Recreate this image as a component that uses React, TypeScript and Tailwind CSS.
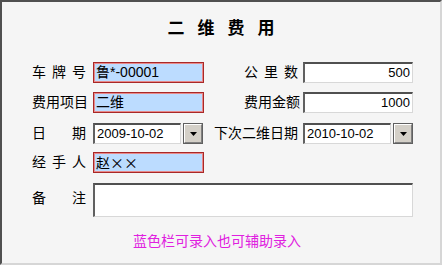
const FONT = "font-['Liberation_Sans','Noto_Sans_CJK_SC',sans-serif]";

function Spread({ chars, w = "w-[54px]" }: { chars: string[]; w?: string }) {
  return (
    <div className={`${w} flex justify-between text-[14px] leading-[21px] text-black`}>
      {chars.map((c, i) => (
        <span key={i}>{c}</span>
      ))}
    </div>
  );
}

function BlueInput({ children }: { children: React.ReactNode }) {
  return (
    <div className="w-[111px] h-[21px] bg-[#bcdcff] border border-[#a82828] shadow-[inset_0_0_0_1px_#e88a8a] px-[2px] text-[14px] leading-[19px] text-black">
      {children}
    </div>
  );
}

function SunkenInput({ value, w, align = "text-left" }: { value: string; w: string; align?: string }) {
  return (
    <div
      className={`${w} h-[21px] bg-white border-t-2 border-l-2 border-t-[#505050] border-l-[#606060] border-r border-b border-r-[#d8d8d8] border-b-[#d8d8d8] px-[2px] text-[13px] leading-[18px] text-black ${align}`}
    >
      {value}
    </div>
  );
}

function DropButton() {
  return (
    <div className="w-[20px] h-[21px] bg-[#606060] p-[1px] flex">
      <div className="flex-1 bg-[#d4d0c8] border-t border-l border-white border-r border-b border-r-[#808080] border-b-[#808080] flex items-center justify-center">
        <svg width="7" height="4" viewBox="0 0 7 4">
          <path d="M0 0h7L3.5 4z" fill="#000" />
        </svg>
      </div>
    </div>
  );
}

export default function App() {
  return (
    <div
      className={`w-[442px] h-[265px] bg-[#f5f5f5] border-l-2 border-t-2 border-l-[#505050] border-t-[#505050] border-r-2 border-b-2 border-r-[#d6d6d6] border-b-[#d6d6d6] ${FONT}`}
    >
      <h1 className="pt-[16px] pl-[13px] text-center text-[17px] leading-[22px] font-bold tracking-[13px] text-black">
        二维费用
      </h1>

      <div className="mt-[22px] flex flex-col gap-[9px] pl-[30px]">
        <div className="flex items-center h-[21px]">
          <Spread chars={["车", "牌", "号"]} />
          <div className="ml-[7px]">
            <BlueInput>鲁*-00001</BlueInput>
          </div>
          <div className="w-[94px] flex justify-end">
            <Spread chars={["公", "里", "数"]} />
          </div>
          <div className="ml-[5px]">
            <SunkenInput value="500" w="w-[110px]" align="text-right" />
          </div>
        </div>

        <div className="flex items-center h-[21px]">
          <Spread chars={["费", "用", "项", "目"]} />
          <div className="ml-[7px]">
            <BlueInput>二维</BlueInput>
          </div>
          <div className="w-[94px] flex justify-end">
            <Spread chars={["费", "用", "金", "额"]} />
          </div>
          <div className="ml-[5px]">
            <SunkenInput value="1000" w="w-[110px]" align="text-right" />
          </div>
        </div>

        <div className="flex items-center h-[21px] mt-[1px]">
          <Spread chars={["日", "期"]} />
          <div className="ml-[7px] flex gap-[2px] w-[111px]">
            <SunkenInput value="2009-10-02" w="w-[88px]" />
            <DropButton />
          </div>
          <div className="w-[94px] flex justify-end text-[14px] leading-[21px]">下次二维日期</div>
          <div className="ml-[5px] flex gap-[2px]">
            <SunkenInput value="2010-10-02" w="w-[88px]" />
            <DropButton />
          </div>
        </div>

        <div className="flex items-center h-[21px] -mt-[1px]">
          <Spread chars={["经", "手", "人"]} />
          <div className="ml-[7px]">
            <BlueInput>
              赵<span className="font-['Noto_Sans_CJK_SC',sans-serif]">××</span>
            </BlueInput>
          </div>
        </div>

        <div className="flex items-start mt-[1px]">
          <div className="pt-[5px]">
            <Spread chars={["备", "注"]} />
          </div>
          <div className="ml-[7px] w-[320px] h-[34px] bg-white border-t-2 border-l-2 border-t-[#505050] border-l-[#606060] border-r border-b border-r-[#d8d8d8] border-b-[#d8d8d8]" />
        </div>
      </div>

      <p className="mt-[15px] pr-[8px] text-center text-[14px] leading-[18px] text-[#e020e0]">
        蓝色栏可录入也可辅助录入
      </p>
    </div>
  );
}
